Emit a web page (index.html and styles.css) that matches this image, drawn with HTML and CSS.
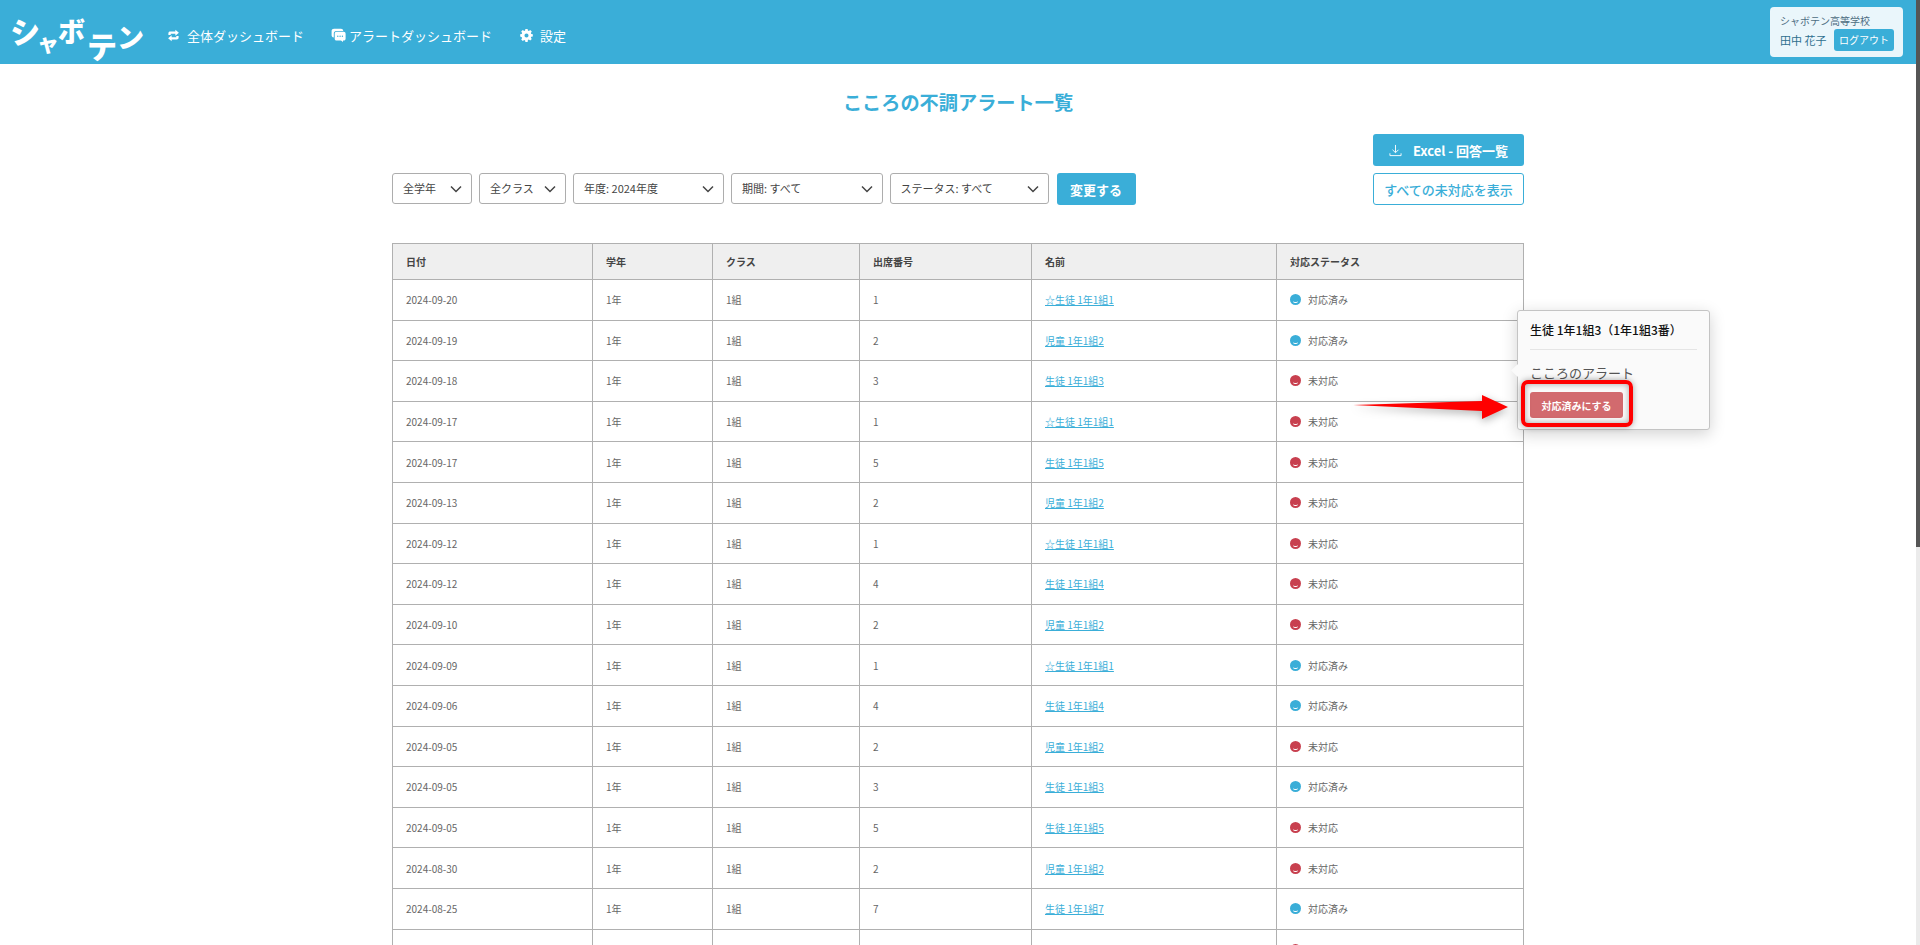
FILE: index.html
```html
<!DOCTYPE html>
<html lang="ja">
<head>
    <meta charset="UTF-8">
    <title>こころの不調アラート一覧</title>
    <link rel="stylesheet" href="styles.css">
</head>
<body>
    <header class="topbar">
        <a class="logo"><span class="l1">シ</span><span class="l2">ャ</span><span class="l3">ボ</span><span class="l4">テ</span><span class="l5">ン</span></a>
        <nav class="nav">
            <a class="nav-item">
                <svg class="nav-icon" viewBox="0 0 14 14"><path d="M1.500 6.500V4.600C1.500 3.500 2.400 2.800 3.400 2.800H9V.8l3.800 3.200L9 7.200V5.200H4v1.300z M12.500 7.500v1.900c0 1.100-.9 1.800-1.900 1.800H5v2L1.200 10 5 6.800v2h5V7.500z" fill="#fff"/></svg>
                全体ダッシュボード
            </a>
            <a class="nav-item nav-item-alert">
                <svg class="nav-icon-wide" viewBox="0 0 15 14"><path d="M3 .8h7c1.200 0 2.200.8 2.200 1.900V3H5.500C3.600 3 2.800 4 2.800 5.300V9.500C1.300 9.200.6 8.400.6 7.300V2.800C.6 1.600 1.700.8 3 .8z" fill="#fff"/><path d="M5.500 3.800h7.200c1.200 0 1.900.8 1.900 1.900v5c0 1.100-.8 1.900-1.900 1.900h-.7v1.300l-2-1.300H5.500c-1.100 0-1.800-.8-1.800-1.900v-5c0-1.100.7-1.900 1.800-1.900z" fill="#fff"/><circle cx="6.800" cy="8.200" r=".7" fill="#3aaed8"/><circle cx="9.100" cy="8.200" r=".7" fill="#3aaed8"/><circle cx="11.400" cy="8.200" r=".7" fill="#3aaed8"/></svg>
                アラートダッシュボード
            </a>
            <a class="nav-item nav-item-gear">
                <svg class="nav-icon" viewBox="0 0 14 14"><path fill="#fff" fill-rule="evenodd" d="M5.800 0h2.400l.3 1.700 1 .4L11 1.100l1.700 1.700-1 1.500.4 1 1.700.3v2.400l-1.700.3-.4 1 1 1.400-1.700 1.700-1.500-1-1 .4L8.200 14H5.800l-.3-1.700-1-.4-1.500 1-1.700-1.700 1-1.400-.4-1L.2 8V5.600l1.700-.3.4-1-1-1.500L3 1.100l1.500 1 1-.4zM7 4.800a2.200 2.200 0 1 0 0 4.400 2.200 2.200 0 0 0 0-4.400z"/></svg>
                設定
            </a>
        </nav>
        <div class="user-box">
            <div class="school">シャボテン高等学校</div>
            <div class="user-row">
                <span class="user-name">田中 花子</span>
                <a class="logout">ログアウト</a>
            </div>
        </div>
    </header>

    <main class="content">
        <h1 class="page-title">こころの不調アラート一覧</h1>

        <div class="toolbar">
            <form class="filters">
                <div class="select w-grade">全学年</div>
                <div class="select w-class">全クラス</div>
                <div class="select w-year">年度: 2024年度</div>
                <div class="select w-term">期間: すべて</div>
                <div class="select w-status">ステータス: すべて</div>
                <button type="button" class="btn btn-solid btn-change">変更する</button>
            </form>
            <div class="actions">
                <button type="button" class="btn btn-solid btn-excel">
                    <svg class="dl-icon" viewBox="0 0 14 14"><path d="M7 1v8M3.800 6.200 7 9.400l3.200-3.200M1 10v2.500h12V10" fill="none" stroke="#fff" stroke-width="1"/></svg>
                    Excel - 回答一覧
                </button>
                <button type="button" class="btn btn-outline">すべての未対応を表示</button>
            </div>
        </div>

        <table class="alerts">
            <thead>
                <tr><th class="c-date">日付</th><th class="c-grade">学年</th><th class="c-class">クラス</th><th class="c-no">出席番号</th><th class="c-name">名前</th><th>対応ステータス</th></tr>
            </thead>
            <tbody>
                <tr><td>2024-09-20</td><td>1年</td><td>1組</td><td>1</td><td><a>☆生徒 1年1組1</a></td><td><span class="dot done"></span>対応済み</td></tr>
                <tr><td>2024-09-19</td><td>1年</td><td>1組</td><td>2</td><td><a>児童 1年1組2</a></td><td><span class="dot done"></span>対応済み</td></tr>
                <tr><td>2024-09-18</td><td>1年</td><td>1組</td><td>3</td><td><a>生徒 1年1組3</a></td><td><span class="dot open"></span>未対応</td></tr>
                <tr><td>2024-09-17</td><td>1年</td><td>1組</td><td>1</td><td><a>☆生徒 1年1組1</a></td><td><span class="dot open"></span>未対応</td></tr>
                <tr><td>2024-09-17</td><td>1年</td><td>1組</td><td>5</td><td><a>生徒 1年1組5</a></td><td><span class="dot open"></span>未対応</td></tr>
                <tr><td>2024-09-13</td><td>1年</td><td>1組</td><td>2</td><td><a>児童 1年1組2</a></td><td><span class="dot open"></span>未対応</td></tr>
                <tr><td>2024-09-12</td><td>1年</td><td>1組</td><td>1</td><td><a>☆生徒 1年1組1</a></td><td><span class="dot open"></span>未対応</td></tr>
                <tr><td>2024-09-12</td><td>1年</td><td>1組</td><td>4</td><td><a>生徒 1年1組4</a></td><td><span class="dot open"></span>未対応</td></tr>
                <tr><td>2024-09-10</td><td>1年</td><td>1組</td><td>2</td><td><a>児童 1年1組2</a></td><td><span class="dot open"></span>未対応</td></tr>
                <tr><td>2024-09-09</td><td>1年</td><td>1組</td><td>1</td><td><a>☆生徒 1年1組1</a></td><td><span class="dot done"></span>対応済み</td></tr>
                <tr><td>2024-09-06</td><td>1年</td><td>1組</td><td>4</td><td><a>生徒 1年1組4</a></td><td><span class="dot done"></span>対応済み</td></tr>
                <tr><td>2024-09-05</td><td>1年</td><td>1組</td><td>2</td><td><a>児童 1年1組2</a></td><td><span class="dot open"></span>未対応</td></tr>
                <tr><td>2024-09-05</td><td>1年</td><td>1組</td><td>3</td><td><a>生徒 1年1組3</a></td><td><span class="dot done"></span>対応済み</td></tr>
                <tr><td>2024-09-05</td><td>1年</td><td>1組</td><td>5</td><td><a>生徒 1年1組5</a></td><td><span class="dot open"></span>未対応</td></tr>
                <tr><td>2024-08-30</td><td>1年</td><td>1組</td><td>2</td><td><a>児童 1年1組2</a></td><td><span class="dot open"></span>未対応</td></tr>
                <tr><td>2024-08-25</td><td>1年</td><td>1組</td><td>7</td><td><a>生徒 1年1組7</a></td><td><span class="dot done"></span>対応済み</td></tr>
                <tr><td></td><td></td><td></td><td></td><td></td><td><span class="dot open"></span></td></tr>
            </tbody>
        </table>
    </main>

    <!-- popover and the red annotation sit on top of the table -->
    <div class="popover">
        <div class="popover-title">生徒 1年1組3（1年1組3番）</div>
        <div class="popover-body">こころのアラート</div>
        <button type="button" class="btn-resolve">対応済みにする</button>
    </div>
    <div class="highlight"></div>
    <svg class="arrow" viewBox="0 0 170 32" width="170" height="32"><polygon points="2,15 131,11 131,5 157,17 131,29 131,21" fill="#f00"/></svg>

    <div class="scrollbar"><div class="scrollbar-thumb"></div></div>
</body>
</html>
```

FILE: styles.css
```css
html::-webkit-scrollbar {
    display: none;
}
body {
    margin: 0 4px 0 0;
    font-family: "Noto Sans CJK JP", "Noto Sans", sans-serif;
    color: #555;
    background-color: #fff;
    position: relative;
}
a {
    text-decoration: none;
}
button {
    font-family: inherit;
    cursor: pointer;
}

/* thin custom scrollbar on the right edge */
.scrollbar {
    position: fixed;
    top: 0;
    right: 0;
    bottom: 0;
    width: 4px;
    background-color: #ebebeb;
}
.scrollbar-thumb {
    height: 547px;
    background-color: #555;
}

/* header */
.topbar {
    height: 64px;
    background-color: #3aaed8;
    display: flex;
    align-items: center;
    padding: 0 13px 0 12px;
}
.logo {
    display: flex;
    align-items: flex-start;
    width: 155px;
    height: 64px;
    color: #fff;
    font-weight: 900;
    line-height: 1;
}
.logo span {
    display: block;
}
.l1 { font-size: 30px; margin-top: 15px; margin-left: -2px; transform: rotate(-6deg); }
.l2 { font-size: 22px; margin-top: 30px; margin-left: -3px; }
.l3 { font-size: 27px; margin-top: 17px; margin-left: -1px; }
.l4 { font-size: 30px; margin-top: 30px; margin-left: 2px; }
.l5 { font-size: 27px; margin-top: 23px; margin-left: 0; }
.nav {
    display: flex;
    align-items: center;
    flex: 1;
    gap: 27px;
    padding-top: 6px;
}
.nav-item {
    display: flex;
    align-items: center;
    gap: 7px;
    color: #fff;
    font-size: 13px;
}
.nav-item-alert {
    gap: 3px;
}
.nav-item-gear {
    margin-left: 1px;
    gap: 7px;
}
.nav-icon {
    width: 13px;
    height: 13px;
}
.nav-icon-wide {
    width: 15px;
    height: 14px;
}
.user-box {
    width: 133px;
    height: 50px;
    box-sizing: border-box;
    padding: 7px 9px 0 10px;
    background-color: #eaf6fb;
    border-radius: 4px;
}
.school {
    font-size: 10px;
    line-height: 14px;
    color: #4d6d82;
}
.user-row {
    display: flex;
    align-items: center;
    justify-content: space-between;
    margin-top: 1px;
}
.user-name {
    font-size: 11px;
    color: #2e6f8e;
}
.logout {
    width: 60px;
    height: 22px;
    line-height: 22px;
    text-align: center;
    font-size: 10px;
    color: #fff;
    background-color: #3aaed8;
    border-radius: 3px;
}

/* main column */
.content {
    width: 1132px;
    margin: 0 auto;
    padding-bottom: 40px;
}
.page-title {
    margin: 0;
    padding-top: 25px;
    height: 45px;
    line-height: 26px;
    text-align: center;
    font-size: 19.200px;
    font-weight: 700;
    color: #3aaed8;
}
.toolbar {
    display: flex;
    justify-content: space-between;
    align-items: flex-end;
}
.filters {
    display: flex;
    gap: 7px;
}
.select {
    height: 31px;
    box-sizing: border-box;
    padding-left: 10px;
    line-height: 29px;
    font-size: 11px;
    color: #444;
    border: 1px solid #adadad;
    border-radius: 3px;
    background-color: #fff;
    background-image: url("data:image/svg+xml,%3Csvg xmlns='http://www.w3.org/2000/svg' viewBox='0 0 12 8'%3E%3Cpath d='M1 1.500 6 6.500 11 1.500' fill='none' stroke='%23444' stroke-width='1.500'/%3E%3C/svg%3E");
    background-repeat: no-repeat;
    background-position: right 9px center;
    background-size: 12px 8px;
}
.w-grade { width: 80px; }
.w-class { width: 87px; }
.w-year { width: 151px; }
.w-term { width: 151.500px; }
.w-status { width: 159px; }
.btn {
    box-sizing: border-box;
    height: 32px;
    font-size: 13px;
    border-radius: 3px;
    padding: 0;
}
.btn-solid {
    color: #fff;
    font-weight: 700;
    background-color: #3aaed8;
    border: none;
}
.btn-change {
    width: 79px;
    margin-left: 1px;
}
.actions {
    display: flex;
    flex-direction: column;
    gap: 7px;
    width: 151px;
}
.btn-excel {
    display: flex;
    align-items: center;
    justify-content: center;
    gap: 11px;
}
.dl-icon {
    width: 13px;
    height: 13px;
}
.btn-outline {
    color: #3aaed8;
    font-weight: 500;
    background-color: #fff;
    border: 1px solid #3aaed8;
}

/* table */
.alerts {
    width: 100%;
    margin-top: 38px;
    border-collapse: collapse;
    table-layout: fixed;
    font-size: 10px;
}
.alerts th,
.alerts td {
    box-sizing: border-box;
    border: 1px solid #b0b0b0;
    padding: 0 0 0 13px;
    text-align: left;
}
.alerts th {
    height: 36px;
    font-weight: 700;
    color: #444;
    background-color: #efefef;
}
.alerts td {
    height: 40.600px;
    color: #666;
}
.alerts a {
    color: #3aaed8;
    text-decoration: underline;
}
.c-date { width: 200px; }
.c-grade { width: 120px; }
.c-class { width: 147px; }
.c-no { width: 172px; }
.c-name { width: 245px; }
.dot {
    display: inline-block;
    width: 11px;
    height: 11px;
    margin-right: 7px;
    border-radius: 50%;
    vertical-align: -1px;
    position: relative;
}
.dot::after {
    content: "";
    position: absolute;
    left: 3px;
    bottom: 2px;
    width: 5px;
    height: 2px;
    border-bottom: 1px solid #fff;
    border-radius: 0 0 3px 3px;
    box-sizing: border-box;
}
.done { background-color: #3aaed8; }
.open { background-color: #c8404f; }

/* popover */
.popover {
    position: absolute;
    left: 1517px;
    top: 310px;
    width: 193px;
    height: 120px;
    box-sizing: border-box;
    padding: 0 12px;
    background-color: #fafafa;
    border: 1px solid #c4c4c4;
    border-radius: 3px;
    box-shadow: 0 4px 16px rgba(0,0,0,0.18);
}
.popover::before {
    content: "";
    position: absolute;
    left: -5px;
    top: 55px;
    width: 9px;
    height: 9px;
    background-color: #fafafa;
    transform: rotate(45deg);
}
.popover-title {
    height: 38px;
    line-height: 38px;
    font-size: 12px;
    font-weight: 500;
    color: #111;
    white-space: nowrap;
    border-bottom: 1px solid #e5e5e5;
}
.popover-body {
    margin-top: 14px;
    line-height: 18px;
    font-size: 13px;
    color: #555;
}
.btn-resolve {
    display: block;
    width: 93px;
    height: 26px;
    margin-top: 10px;
    padding: 0;
    font-size: 10px;
    font-weight: 700;
    color: #fff;
    background-color: #d26a6e;
    border: none;
    border-radius: 3px;
}
.highlight {
    position: absolute;
    left: 1521px;
    top: 380px;
    width: 112px;
    height: 47px;
    box-sizing: border-box;
    border: 4px solid #f00;
    border-radius: 7px;
    box-shadow: 0 0 6px rgba(0,0,0,0.35), inset 0 0 6px rgba(0,0,0,0.35);
}
.arrow {
    position: absolute;
    left: 1351px;
    top: 390px;
    filter: drop-shadow(0 3px 4px rgba(0,0,0,0.3));
}
```
